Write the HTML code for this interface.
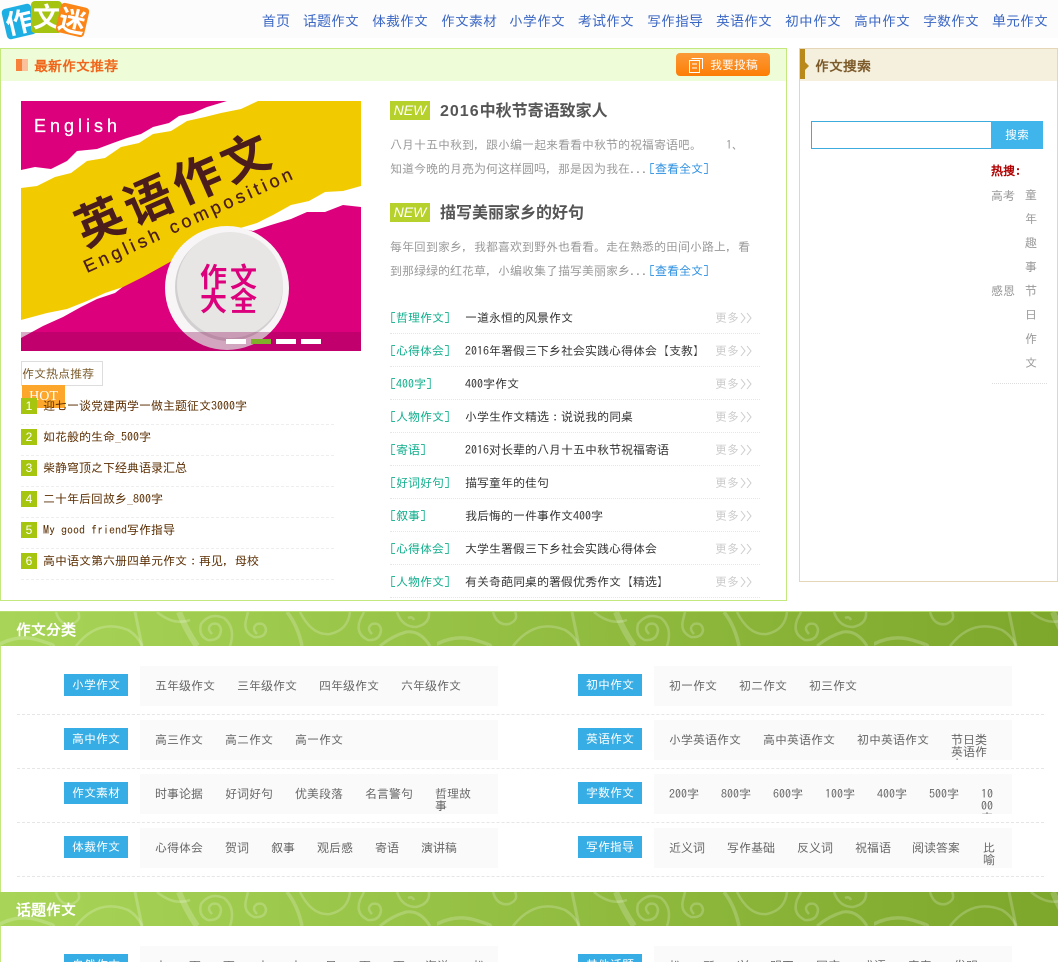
<!DOCTYPE html>
<html><head><meta charset="utf-8"><title>作文迷</title>
<style>
*{margin:0;padding:0;box-sizing:border-box}
html,body{width:1058px;height:962px;overflow:hidden;background:#fff}
body{position:relative;font:12px/12px IPAGothic,"WenQuanYi Zen Hei",sans-serif;color:#333;-webkit-font-smoothing:none}
.a{position:absolute}
.t{position:absolute;white-space:nowrap}
#hd{left:0;top:0;width:1058px;height:38px;background:#fcfcfc}
.nav{position:absolute;top:14px;font-size:14px;line-height:14px;color:#3a66c4;white-space:nowrap}
.tile{position:absolute;color:#fff;font:bold 27px/30px "Noto Sans CJK SC",sans-serif;text-align:center;border-radius:4px}
.nw{position:absolute;left:390px;width:40px;height:19px;background:#b6d12c;color:#fff;font:italic 14px/19px "Liberation Sans",sans-serif;text-align:center}
.h3{position:absolute;left:440px;font:bold 16px/20px "Liberation Sans","Noto Sans CJK SC",sans-serif;color:#555;white-space:nowrap}
.h3 i{font-style:normal;letter-spacing:1px}
.s{position:absolute;left:390px;color:#999;white-space:nowrap}
.lk{position:absolute;left:649px;color:#2b8fe0;white-space:nowrap}
.tag{position:absolute;left:390px;color:#0fae8c;white-space:nowrap}
.ti{position:absolute;left:465px;color:#333;white-space:nowrap}
.mo{position:absolute;left:715px;color:#ccc;white-space:nowrap}
.chev{position:absolute;left:740px}
.dl{position:absolute;left:390px;width:370px;height:1px;border-top:1px dotted #e6e6e6}
.n{position:absolute;left:21px;width:16px;height:16px;background:#a6c50f;color:#fff;text-align:center;font:12px/16px "Liberation Sans",sans-serif}
.hl{position:absolute;left:43px;color:#5a2d00;white-space:nowrap}
.hd{position:absolute;left:21px;width:313px;height:1px;border-top:1px dashed #eee}
.band{position:absolute;left:0;width:1058px;height:34px}
.bt{position:absolute;left:16px;color:#fff;font-size:15px;line-height:15px;font-weight:bold;white-space:nowrap}
.lb{position:absolute;width:64px;height:22px;background:#36ade4;color:#fff;text-align:center;line-height:22px}
.bx{position:absolute;height:40px;background:#fafafa;overflow:hidden;color:#666}
.bx span{position:absolute;top:14px;line-height:12px;white-space:nowrap}
.bx span.w{white-space:normal;word-break:break-all}
.rl{position:absolute;left:17px;width:1027px;height:1px;border-top:1px dashed #e6e6e6}
.g{position:absolute;color:#999;white-space:nowrap}
</style></head><body>

<div id="hd" class="a"></div>
<div class="tile" style="left:4px;top:6px;width:30px;height:31px;background:#1daee4;transform:rotate(-13deg)">作</div>
<div class="tile" style="left:31px;top:1px;width:31px;height:32px;background:#a5c412">文</div>
<div class="tile" style="left:58px;top:5px;width:29px;height:30px;background:#fb8516;transform:rotate(13deg)">迷</div>

<span class="nav" style="left:262px">首页</span><span class="nav" style="left:303px">话题作文</span><span class="nav" style="left:372px">体裁作文</span><span class="nav" style="left:441px">作文素材</span><span class="nav" style="left:509px">小学作文</span><span class="nav" style="left:578px">考试作文</span><span class="nav" style="left:647px">写作指导</span><span class="nav" style="left:716px">英语作文</span><span class="nav" style="left:785px">初中作文</span><span class="nav" style="left:854px">高中作文</span><span class="nav" style="left:923px">字数作文</span><span class="nav" style="left:992px">单元作文</span>

<!-- main box -->
<div class="a" style="left:0;top:48px;width:787px;height:553px;border:1px solid #c3e87e"></div>
<div class="a" style="left:1px;top:49px;width:785px;height:32px;background:#eefcd8"></div>
<div class="a" style="left:16px;top:59px;width:6px;height:12px;background:#f7803a"></div>
<div class="a" style="left:22px;top:59px;width:6px;height:12px;background:#fcc09a"></div>
<span class="t" style="left:34px;top:59px;font-size:14px;line-height:14px;font-weight:bold;color:#f0651a">最新作文推荐</span>
<div class="a" style="left:676px;top:53px;width:94px;height:23px;border-radius:4px;background:linear-gradient(#fb9a38,#fd7d05)"></div>
<svg class="a" style="left:688px;top:57px" width="16" height="16" viewBox="0 0 16 16"><path d="M3.5 1.5H14.5V12M1.5 3.5H11.5V15.5H1.5ZM4 7H9M4 11H9" fill="none" stroke="#fff" stroke-width="1"/></svg>
<span class="t" style="left:710px;top:58px;color:#fff;line-height:14px;font-size:12px">我要投稿</span>

<!-- banner -->
<svg class="a" style="left:21px;top:101px" width="340" height="250" viewBox="0 0 340 250">
<rect width="340" height="250" fill="#dc007c"/>
<polygon fill="#fff" points="0,69 14,66 30,68 46,60 56,50 76,48 92,42 106,37 120,33 132,26 148,22 158,15 172,12 186,6 206,0 340,0 340,106 322,104 304,111 286,111 270,118 250,124 232,130 214,126 196,128 178,140 162,150 146,158 130,168 112,178 94,192 76,198 60,206 42,216 22,225 0,237"/>
<polygon fill="#f1cb00" points="0,87 16,85 34,76 50,72 66,60 84,57 100,46 118,42 132,33 150,30 166,20 184,16 200,12 220,8 237,0 340,0 340,85 322,90 304,91 288,100 270,104 252,114 236,122 216,128 196,134 178,146 158,156 140,166 122,176 102,186 84,192 66,200 46,208 26,212 0,219"/>
<circle cx="206" cy="187" r="62" fill="#f7f5f5"/>
<circle cx="208" cy="186" r="54" fill="#b8b5b5" opacity=".6"/>
<circle cx="209" cy="184" r="53" fill="#e8e5e5"/>
<text transform="translate(154 88) rotate(-23.7)" y="17" text-anchor="middle" font-family="'Noto Sans CJK SC',sans-serif" font-weight="bold" font-size="48" letter-spacing="5" fill="#4a1c1c">英语作文</text>
<text transform="translate(66 172) rotate(-24.5)" font-family="'Liberation Sans',sans-serif" font-size="18" textLength="227" fill="#4a1c1c" stroke="#4a1c1c" stroke-width=".3">English composition</text>
<text x="13" y="31" font-family="'Liberation Sans',sans-serif" font-size="18" textLength="83" fill="#fff" stroke="#fff" stroke-width=".3">English</text>
<text x="179" y="186" font-family="'Noto Sans CJK SC',sans-serif" font-weight="bold" font-size="27" letter-spacing="3" fill="#dc007c">作文</text>
<text x="179" y="210" font-family="'Noto Sans CJK SC',sans-serif" font-weight="bold" font-size="27" letter-spacing="3" fill="#dc007c">大全</text>
<rect y="231" width="340" height="19" fill="#8a0050" opacity=".32"/>
<rect x="205" y="238" width="20" height="5" fill="#fff"/>
<rect x="230" y="238" width="20" height="5" fill="#7fae2a"/>
<rect x="255" y="238" width="20" height="5" fill="#fff"/>
<rect x="280" y="238" width="20" height="5" fill="#fff"/>
</svg>

<!-- hot -->
<div class="a" style="left:21px;top:361px;width:82px;height:25px;border:1px solid #ddd"></div>
<span class="t" style="left:22px;top:368px;color:#7a5a2a">作文热点推荐</span>
<div class="a" style="left:22px;top:385px;width:43px;height:23px;background:#fca72c;color:#fff;text-align:center;font:14px/24px 'Liberation Serif',serif">HOT</div>
<div class="n" style="top:398px">1</div><span class="hl" style="top:400px">迎七一谈党建两学一做主题征文3000字</span><div class="hd" style="top:424px"></div>
<div class="n" style="top:429px">2</div><span class="hl" style="top:431px">如花般的生命_500字</span><div class="hd" style="top:455px"></div>
<div class="n" style="top:460px">3</div><span class="hl" style="top:462px">柴静穹顶之下经典语录汇总</span><div class="hd" style="top:486px"></div>
<div class="n" style="top:491px">4</div><span class="hl" style="top:493px">二十年后回故乡_800字</span><div class="hd" style="top:517px"></div>
<div class="n" style="top:522px">5</div><span class="hl" style="top:524px">My good friend写作指导</span><div class="hd" style="top:548px"></div>
<div class="n" style="top:553px">6</div><span class="hl" style="top:555px">高中语文第六册四单元作文：再见，母校</span><div class="hd" style="top:579px"></div>

<!-- news -->
<div class="nw" style="top:101px">NEW</div><span class="h3" style="top:102px"><i>2016</i>中秋节寄语致家人</span>
<span class="s" style="top:139px">八月十五中秋到，跟小编一起来看看中秋节的祝福寄语吧。</span><span class="s" style="left:726px;top:139px">1、</span>
<span class="s" style="top:163px">知道今晚的月亮为何这样圆吗，那是因为我在...</span><span class="lk" style="top:163px">[查看全文]</span>
<div class="nw" style="top:203px">NEW</div><span class="h3" style="top:204px">描写美丽家乡的好句</span>
<span class="s" style="top:241px">每年回到家乡，我都喜欢到野外也看看。走在熟悉的田间小路上，看</span>
<span class="s" style="top:265px">到那绿绿的红花草，小编收集了描写美丽家乡...</span><span class="lk" style="top:265px">[查看全文]</span>

<span class="tag" style="top:312px">[哲理作文]</span><span class="ti" style="top:312px">一道永恒的风景作文</span><span class="mo" style="top:312px">更多</span><svg class="chev" style="top:312px" width="13" height="12"><path d="M1 1l4 5-4 5M7 1l4 5-4 5" fill="none" stroke="#ccc"/></svg><div class="dl" style="top:333px"></div>
<span class="tag" style="top:345px">[心得体会]</span><span class="ti" style="top:345px">2016年署假三下乡社会实践心得体会【支教】</span><span class="mo" style="top:345px">更多</span><svg class="chev" style="top:345px" width="13" height="12"><path d="M1 1l4 5-4 5M7 1l4 5-4 5" fill="none" stroke="#ccc"/></svg><div class="dl" style="top:366px"></div>
<span class="tag" style="top:378px">[400字]</span><span class="ti" style="top:378px">400字作文</span><span class="mo" style="top:378px">更多</span><svg class="chev" style="top:378px" width="13" height="12"><path d="M1 1l4 5-4 5M7 1l4 5-4 5" fill="none" stroke="#ccc"/></svg><div class="dl" style="top:399px"></div>
<span class="tag" style="top:411px">[人物作文]</span><span class="ti" style="top:411px">小学生作文精选：说说我的同桌</span><span class="mo" style="top:411px">更多</span><svg class="chev" style="top:411px" width="13" height="12"><path d="M1 1l4 5-4 5M7 1l4 5-4 5" fill="none" stroke="#ccc"/></svg><div class="dl" style="top:432px"></div>
<span class="tag" style="top:444px">[寄语]</span><span class="ti" style="top:444px">2016对长辈的八月十五中秋节祝福寄语</span><span class="mo" style="top:444px">更多</span><svg class="chev" style="top:444px" width="13" height="12"><path d="M1 1l4 5-4 5M7 1l4 5-4 5" fill="none" stroke="#ccc"/></svg><div class="dl" style="top:465px"></div>
<span class="tag" style="top:477px">[好词好句]</span><span class="ti" style="top:477px">描写童年的佳句</span><span class="mo" style="top:477px">更多</span><svg class="chev" style="top:477px" width="13" height="12"><path d="M1 1l4 5-4 5M7 1l4 5-4 5" fill="none" stroke="#ccc"/></svg><div class="dl" style="top:498px"></div>
<span class="tag" style="top:510px">[叙事]</span><span class="ti" style="top:510px">我后悔的一件事作文400字</span><span class="mo" style="top:510px">更多</span><svg class="chev" style="top:510px" width="13" height="12"><path d="M1 1l4 5-4 5M7 1l4 5-4 5" fill="none" stroke="#ccc"/></svg><div class="dl" style="top:531px"></div>
<span class="tag" style="top:543px">[心得体会]</span><span class="ti" style="top:543px">大学生署假三下乡社会实践心得体会</span><span class="mo" style="top:543px">更多</span><svg class="chev" style="top:543px" width="13" height="12"><path d="M1 1l4 5-4 5M7 1l4 5-4 5" fill="none" stroke="#ccc"/></svg><div class="dl" style="top:564px"></div>
<span class="tag" style="top:576px">[人物作文]</span><span class="ti" style="top:576px">有关奇葩同桌的署假优秀作文【精选】</span><span class="mo" style="top:576px">更多</span><svg class="chev" style="top:576px" width="13" height="12"><path d="M1 1l4 5-4 5M7 1l4 5-4 5" fill="none" stroke="#ccc"/></svg><div class="dl" style="top:597px"></div>

<!-- sidebar -->
<div class="a" style="left:799px;top:48px;width:259px;height:534px;border:1px solid #e5d6b8"></div>
<div class="a" style="left:800px;top:49px;width:257px;height:32px;background:#f4f0dd"></div>
<div class="a" style="left:800px;top:49px;width:5px;height:30px;background:#b98a1b"></div>
<svg class="a" style="left:805px;top:62px" width="4" height="8"><path d="M0 0l4 4-4 4z" fill="#b98a1b"/></svg>
<span class="t" style="left:815px;top:59px;font-size:14px;line-height:14px;font-weight:bold;color:#7d5a2a">作文搜索</span>
<div class="a" style="left:811px;top:121px;width:181px;height:28px;border:1px solid #3cacdf;background:#fff"></div>
<div class="a" style="left:991px;top:121px;width:52px;height:28px;background:#3fb5ec;color:#fff;text-align:center;line-height:28px">搜索</div>
<span class="t" style="left:991px;top:165px;color:#b00000;font-weight:bold">热搜:</span>
<span class="g" style="left:991px;top:190px">高考</span><span class="g" style="left:991px;top:285px">感恩</span>
<span class="g" style="left:1025px;top:189px">童</span><span class="g" style="left:1025px;top:213px">年</span><span class="g" style="left:1025px;top:237px">趣</span><span class="g" style="left:1025px;top:261px">事</span><span class="g" style="left:1025px;top:285px">节</span><span class="g" style="left:1025px;top:309px">日</span><span class="g" style="left:1025px;top:333px">作</span><span class="g" style="left:1025px;top:357px">文</span>
<div class="a" style="left:992px;top:383px;width:55px;height:1px;border-top:1px dotted #ddd"></div>

<!-- left border & bands -->
<div class="a" style="left:0;top:611px;width:1px;height:351px;background:#c3e87e"></div>
<div class="a" style="left:0;top:611px;width:1058px;height:1px;background:#b9dc70"></div>
<svg class="band" style="top:612px" width="1058" height="34" viewBox="0 0 1058 34">
<defs><linearGradient id="gr" x1="0" x2="1" y1="0" y2="0"><stop offset="0" stop-color="#a8d558"/><stop offset="1" stop-color="#7da72b"/></linearGradient>
<pattern id="sw" width="437" height="34" patternUnits="userSpaceOnUse"><g fill="none" stroke="#fff" stroke-opacity=".2" stroke-width="2.5">
<path d="M-2 33Q18 22 38 28T52 34" stroke-width="3.5"/>
<path d="M76 34Q98 6 128 18Q138 24 142 34"/>
<path d="M135 0L142 34" stroke-width="3"/>
<path d="M56 0Q60 14 72 12Q82 8 78 0"/>
<path d="M179 0Q186 18 197 34" stroke-width="6"/>
<path d="M157 0Q174 14 190 8"/>
<path d="M212 22Q206 16 212 12Q220 10 221 18Q220 29 208 28Q198 24 201 12Q210 0 224 6Q236 16 230 34"/>
<path d="M257 22Q251 16 257 12Q265 10 266 18Q265 26 254 25Q243 20 246 8L248 0"/>
<path d="M287 0Q298 14 302 34" stroke-width="3.5"/>
<path d="M300 0Q312 24 330 22Q348 18 350 0"/>
<path d="M372 22Q366 16 372 12Q380 10 381 18Q380 29 368 28Q355 22 360 8L364 0"/>
<path d="M397 0Q402 15 416 15Q430 12 429 0M408 6Q412 4 414 8"/>
<path d="M430 34Q420 18 406 20Q392 24 380 34" stroke-width="3"/>
</g></pattern></defs>
<rect width="1058" height="34" fill="url(#gr)"/><rect width="1058" height="34" fill="url(#sw)"/></svg>
<span class="bt" style="top:622px">作文分类</span>
<svg class="band" style="top:892px" width="1058" height="34" viewBox="0 0 1058 34"><rect width="1058" height="34" fill="url(#gr)"/><rect width="1058" height="34" fill="url(#sw)"/></svg>
<span class="bt" style="top:902px">话题作文</span>

<!-- rows -->
<div class="lb" style="left:64px;top:674px">小学作文</div>
<div class="bx" style="left:140px;top:666px;width:358px"><span style="left:15px">五年级作文</span><span style="left:97px">三年级作文</span><span style="left:179px">四年级作文</span><span style="left:261px">六年级作文</span></div>
<div class="lb" style="left:578px;top:674px">初中作文</div>
<div class="bx" style="left:654px;top:666px;width:358px"><span style="left:15px">初一作文</span><span style="left:85px">初二作文</span><span style="left:155px">初三作文</span></div>
<div class="rl" style="top:714px"></div>

<div class="lb" style="left:64px;top:728px">高中作文</div>
<div class="bx" style="left:140px;top:720px;width:358px"><span style="left:15px">高三作文</span><span style="left:85px">高二作文</span><span style="left:155px">高一作文</span></div>
<div class="lb" style="left:578px;top:728px">英语作文</div>
<div class="bx" style="left:654px;top:720px;width:358px"><span style="left:15px">小学英语作文</span><span style="left:109px">高中英语作文</span><span style="left:203px">初中英语作文</span><span class="w" style="left:297px;width:36px">节日类英语作文</span></div>
<div class="rl" style="top:768px"></div>

<div class="lb" style="left:64px;top:782px">作文素材</div>
<div class="bx" style="left:140px;top:774px;width:358px"><span style="left:15px">时事论据</span><span style="left:85px">好词好句</span><span style="left:155px">优美段落</span><span style="left:225px">名言警句</span><span class="w" style="left:295px;width:36px">哲理故事</span></div>
<div class="lb" style="left:578px;top:782px">字数作文</div>
<div class="bx" style="left:654px;top:774px;width:358px"><span style="left:15px">200字</span><span style="left:67px">800字</span><span style="left:119px">600字</span><span style="left:171px">100字</span><span style="left:223px">400字</span><span style="left:275px">500字</span><span class="w" style="left:327px;width:14px">1000字</span></div>
<div class="rl" style="top:822px"></div>

<div class="lb" style="left:64px;top:836px">体裁作文</div>
<div class="bx" style="left:140px;top:828px;width:358px"><span style="left:15px">心得体会</span><span style="left:85px">贺词</span><span style="left:131px">叙事</span><span style="left:177px">观后感</span><span style="left:235px">寄语</span><span style="left:281px">演讲稿</span></div>
<div class="lb" style="left:578px;top:836px">写作指导</div>
<div class="bx" style="left:654px;top:828px;width:358px"><span style="left:15px">近义词</span><span style="left:73px">写作基础</span><span style="left:143px">反义词</span><span style="left:201px">祝福语</span><span style="left:258px">阅读答案</span><span class="w" style="left:329px;width:12px">比喻</span></div>
<div class="rl" style="top:876px"></div>

<div class="lb" style="left:64px;top:954px">自然作文</div>
<div class="bx" style="left:140px;top:946px;width:358px"><span style="left:15px">大</span><span style="left:49px">雨</span><span style="left:83px">雨</span><span style="left:117px">大</span><span style="left:150px">六</span><span style="left:185px">日</span><span style="left:219px">雨</span><span style="left:253px">雨</span><span style="left:285px">海洋</span><span style="left:333px">松</span></div>
<div class="lb" style="left:578px;top:954px">其他话题</div>
<div class="bx" style="left:654px;top:946px;width:358px"><span style="left:15px">松</span><span style="left:49px">所</span><span style="left:83px">兴</span><span style="left:116px">明天</span><span style="left:162px">国庆</span><span style="left:208px">成语</span><span style="left:254px">青春</span><span style="left:300px">发明</span></div>

</body></html>
